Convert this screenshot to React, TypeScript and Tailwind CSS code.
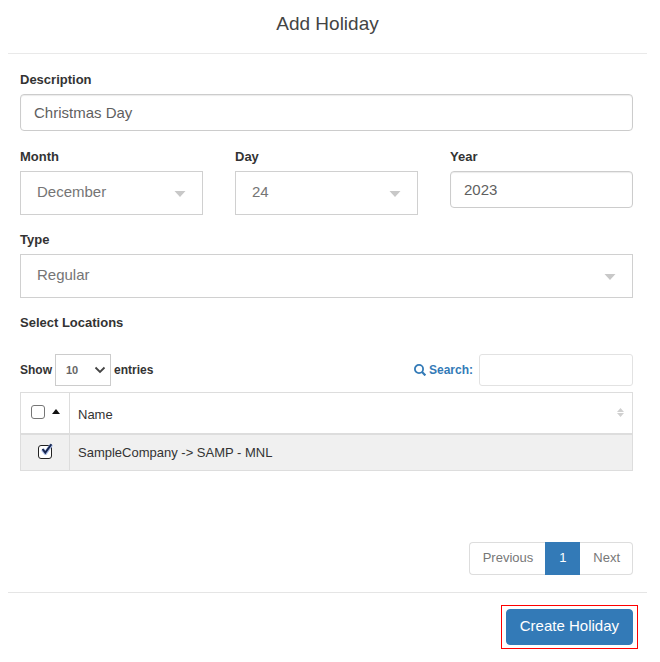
import { useState } from 'react';
import type { ReactNode } from 'react';

const MONTHS = ['January', 'February', 'March', 'April', 'May', 'June', 'July', 'August', 'September', 'October', 'November', 'December'];
const DAYS = Array.from({ length: 31 }, (_, i) => String(i + 1));

function Label({ id, children }: { id: string; children: ReactNode }) {
  return (
    <label htmlFor={id} className="mb-1 block text-[13px] leading-5 font-bold text-[#333333]">
      {children}
    </label>
  );
}

function TextField({ id, label, initial }: { id: string; label: string; initial: string }) {
  return (
    <div>
      <Label id={id}>{label}</Label>
      <input
        id={id}
        type="text"
        defaultValue={initial}
        className="block h-[37px] w-full rounded border border-[#cccccc] bg-white px-[13px] text-[15px] text-[#5f5f5f] shadow-[inset_0_1px_1px_rgba(0,0,0,0.08)] outline-none"
      />
    </div>
  );
}

function SelectField({ id, label, initial, options }: { id: string; label: string; initial: string; options: string[] }) {
  return (
    <div>
      <Label id={id}>{label}</Label>
      <div className="relative">
        <select
          id={id}
          defaultValue={initial}
          className="block h-11 w-full appearance-none border border-[#d0d0d0] bg-white pr-10 pb-[2px] pl-4 text-[15px] text-[#757575] outline-none"
        >
          {options.map((o) => (
            <option key={o}>{o}</option>
          ))}
        </select>
        <svg viewBox="0 0 12 6" className="pointer-events-none absolute top-5 right-[17px] h-[6px] w-3" aria-hidden="true">
          <path d="M.5 0h11L6 6z" fill="#c8c8c8" />
        </svg>
      </div>
    </div>
  );
}

export default function App() {
  const [selected, setSelected] = useState(true);

  return (
    <form
      onSubmit={(e) => e.preventDefault()}
      className="bg-white pr-[13px] pl-2 font-['Liberation_Sans',Arial,sans-serif] text-[13px] text-[#333333]"
    >
      <header className="border-b border-[#e9e9e9] pt-[10px] pb-[15px]">
        <h1 className="text-center text-[19px] leading-7 text-[#444444]">Add Holiday</h1>
      </header>

      <div className="pr-[14px] pb-[17px] pl-3">
        <div className="pt-4">
          <TextField id="description" label="Description" initial="Christmas Day" />
        </div>

        <div className="mt-4 grid grid-cols-3 gap-8">
          <SelectField id="month" label="Month" initial="December" options={MONTHS} />
          <SelectField id="day" label="Day" initial="24" options={DAYS} />
          <TextField id="year" label="Year" initial="2023" />
        </div>

        <div className="mt-[15px]">
          <SelectField id="type" label="Type" initial="Regular" options={['Regular', 'Special']} />
        </div>

        <h2 className="mt-[15px] text-[13px] leading-5 font-bold">Select Locations</h2>

        <div className="mt-[21px] flex items-center justify-between text-[12px] font-bold">
          <div className="flex items-center gap-[3px]">
            <label htmlFor="length">Show</label>
            <div className="relative">
              <select
                id="length"
                defaultValue="10"
                className="block h-8 w-14 appearance-none border border-[#cccccc] bg-white pl-[10px] text-[11px] font-bold text-[#666666] outline-none"
              >
                <option>10</option>
                <option>25</option>
                <option>50</option>
                <option>100</option>
              </select>
              <svg viewBox="0 0 12 8" className="pointer-events-none absolute top-3 right-[5px] h-2 w-3" aria-hidden="true">
                <path d="M1.5 1.5L6 6l4.5-4.5" fill="none" stroke="#444444" strokeWidth="1.8" />
              </svg>
            </div>
            <span>entries</span>
          </div>
          <div className="flex items-center gap-[6px]">
            <label htmlFor="search" className="flex items-center gap-[3px] text-[#337ab7]">
              <svg viewBox="0 0 12 12" className="h-3 w-3" fill="none" stroke="currentColor" aria-hidden="true">
                <circle cx="5" cy="5" r="4.1" strokeWidth="1.8" />
                <path d="M7.8 7.8l3.6 3.6" strokeWidth="2.2" />
              </svg>
              Search:
            </label>
            <input
              id="search"
              type="text"
              className="h-8 w-[154px] rounded-[3px] border border-[#e2e2e2] bg-white px-2 font-normal outline-none"
            />
          </div>
        </div>

        <table className="mt-[6px] w-full border-collapse border border-[#dddddd] text-left text-[13px]">
          <thead>
            <tr className="h-[41px] border-b-2 border-[#dddddd]">
              <th className="w-[49px] border-r border-[#dddddd] pb-px pl-[10px] font-normal">
                <div className="flex items-center gap-[7px]">
                  <input
                    type="checkbox"
                    aria-label="Select all locations"
                    className="h-[14px] w-[14px] appearance-none rounded-[3px] border border-[#767676] bg-white"
                  />
                  <svg viewBox="0 0 8 5" className="mb-[2px] h-[5px] w-2" aria-hidden="true">
                    <path d="M0 5L4 0l4 5z" fill="#111111" />
                  </svg>
                </div>
              </th>
              <th className="pt-[3px] pr-2 pl-2 font-normal">
                <div className="flex items-center justify-between">
                  Name
                  <svg viewBox="0 0 7 9" className="mb-1 h-[9px] w-[7px]" fill="#d0d0d0" aria-hidden="true">
                    <path d="M0 4l3.5-4L7 4zM0 5h7L3.5 9z" />
                  </svg>
                </div>
              </th>
            </tr>
          </thead>
          <tbody>
            <tr className="h-[37px] bg-[#f0f0f0]">
              <td className="border-r border-[#dddddd] pl-[17px]">
                <div className="relative h-[14px] w-[14px]">
                  <input
                    type="checkbox"
                    aria-label="Select SampleCompany -> SAMP - MNL"
                    checked={selected}
                    onChange={(e) => setSelected(e.target.checked)}
                    className="peer block h-[14px] w-[14px] appearance-none rounded-[3px] border border-[#222222] bg-white"
                  />
                  <svg
                    viewBox="0 0 12 12"
                    className="pointer-events-none absolute -top-[2px] left-[3px] hidden h-3 w-3 peer-checked:block"
                    aria-hidden="true"
                  >
                    <path d="M1.5 6.5L4.5 10 10.5 1.5" fill="none" stroke="#a9bce6" strokeWidth="3.6" />
                    <path d="M1.5 6l2.8 3.6L10.4 1.2" fill="none" stroke="#17264f" strokeWidth="1.9" />
                  </svg>
                </div>
              </td>
              <td className="px-2">SampleCompany -&gt; SAMP - MNL</td>
            </tr>
          </tbody>
        </table>

        <nav aria-label="Location pages" className="mt-[71px] flex justify-end text-[13px] text-[#777777]">
          <button type="button" className="h-[33px] rounded-l border border-r-0 border-[#dddddd] pr-3 pb-[2px] pl-[13px]">
            Previous
          </button>
          <button type="button" aria-current="page" className="h-[33px] w-[35px] border border-[#337ab7] bg-[#337ab7] pb-[2px] text-white">
            1
          </button>
          <button type="button" className="h-[33px] rounded-r border border-l-0 border-[#dddddd] pr-3 pb-[2px] pl-[13px]">
            Next
          </button>
        </nav>
      </div>

      <footer className="flex justify-end border-t border-[#e5e5e5] pt-3 pr-[9px] pb-3">
        <div className="border border-[#ff0000] px-1 py-[3px]">
          <button type="submit" className="block h-9 rounded border border-[#337ab7] bg-[#337ab7] px-[13px] pb-px text-[15px] text-white">
            Create Holiday
          </button>
        </div>
      </footer>
    </form>
  );
}
